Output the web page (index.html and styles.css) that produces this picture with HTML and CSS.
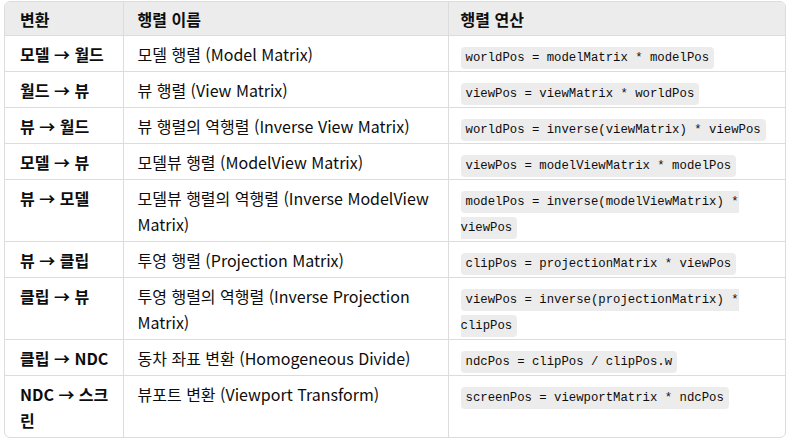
FILE: index.html
```html
<!DOCTYPE html>
<html lang="ko">
<head>
<meta charset="utf-8">
<link rel="stylesheet" href="styles.css">
</head>
<body>
<div class="wrap">
<table class="tbl">
<colgroup><col class="c1"><col class="c2"><col class="c3"></colgroup>
<thead>
<tr><th>변환</th><th>행렬 이름</th><th>행렬 연산</th></tr>
</thead>
<tbody>
<tr><td class="b">모델 → 월드</td><td>모델 행렬 (Model Matrix)</td><td><code>worldPos = modelMatrix * modelPos</code></td></tr>
<tr><td class="b">월드 → 뷰</td><td>뷰 행렬 (View Matrix)</td><td><code>viewPos = viewMatrix * worldPos</code></td></tr>
<tr><td class="b">뷰 → 월드</td><td>뷰 행렬의 역행렬 (Inverse View Matrix)</td><td><code>worldPos = inverse(viewMatrix) * viewPos</code></td></tr>
<tr><td class="b">모델 → 뷰</td><td>모델뷰 행렬 (ModelView Matrix)</td><td><code>viewPos = modelViewMatrix * modelPos</code></td></tr>
<tr><td class="b">뷰 → 모델</td><td>모델뷰 행렬의 역행렬 (Inverse ModelView Matrix)</td><td><code>modelPos = inverse(modelViewMatrix) * viewPos</code></td></tr>
<tr><td class="b">뷰 → 클립</td><td>투영 행렬 (Projection Matrix)</td><td><code>clipPos = projectionMatrix * viewPos</code></td></tr>
<tr><td class="b">클립 → 뷰</td><td>투영 행렬의 역행렬 (Inverse Projection Matrix)</td><td><code>viewPos = inverse(projectionMatrix) * clipPos</code></td></tr>
<tr><td class="b">클립 → NDC</td><td>동차 좌표 변환 (Homogeneous Divide)</td><td><code>ndcPos = clipPos / clipPos.w</code></td></tr>
<tr><td class="b">NDC → 스크린</td><td>뷰포트 변환 (Viewport Transform)</td><td><code>screenPos = viewportMatrix * ndcPos</code></td></tr>
</tbody>
</table>
</div>
</body>
</html>
```
FILE: styles.css
```css
html, body {
  margin: 0;
  padding: 0;
  background: #ffffff;
}
body {
  font-family: "Noto Sans CJK KR", "Open Sans", sans-serif;
  font-size: 16px;
  color: #0d0d0d;
}
.wrap {
  margin: 1px 0 0 4px;
  width: 780px;
  border: 1px solid #dcdcdc;
  border-radius: 6px;
  overflow: hidden;
}
.tbl {
  width: 100%;
  border-collapse: collapse;
  table-layout: fixed;
}
.c1 { width: 118px; }
.c2 { width: 325px; }
.c3 { width: auto; }
.tbl th, .tbl td {
  text-align: left;
  vertical-align: top;
  line-height: 26px;
  padding: 5px 12px 4px 14px;
  border-left: 1px solid #dcdcdc;
  border-top: 1px solid #dcdcdc;
}
.tbl th:first-child, .tbl td:first-child {
  border-left: none;
  padding-left: 15px;
}
.tbl th:last-child, .tbl td:last-child { padding-left: 12px; }
.tbl thead tr th { border-top: none; }
.tbl th {
  background: #ececec;
  font-weight: 700;
  padding-top: 4px;
  padding-bottom: 3px;
}
.tbl td.b { font-weight: 700; }
code {
  font-family: "Liberation Mono", monospace;
  font-size: 12.3px;
  line-height: 1;
  background: #ececec;
  border-radius: 4px;
  padding: 4px 5px;
  -webkit-box-decoration-break: slice;
  box-decoration-break: slice;
}
```
